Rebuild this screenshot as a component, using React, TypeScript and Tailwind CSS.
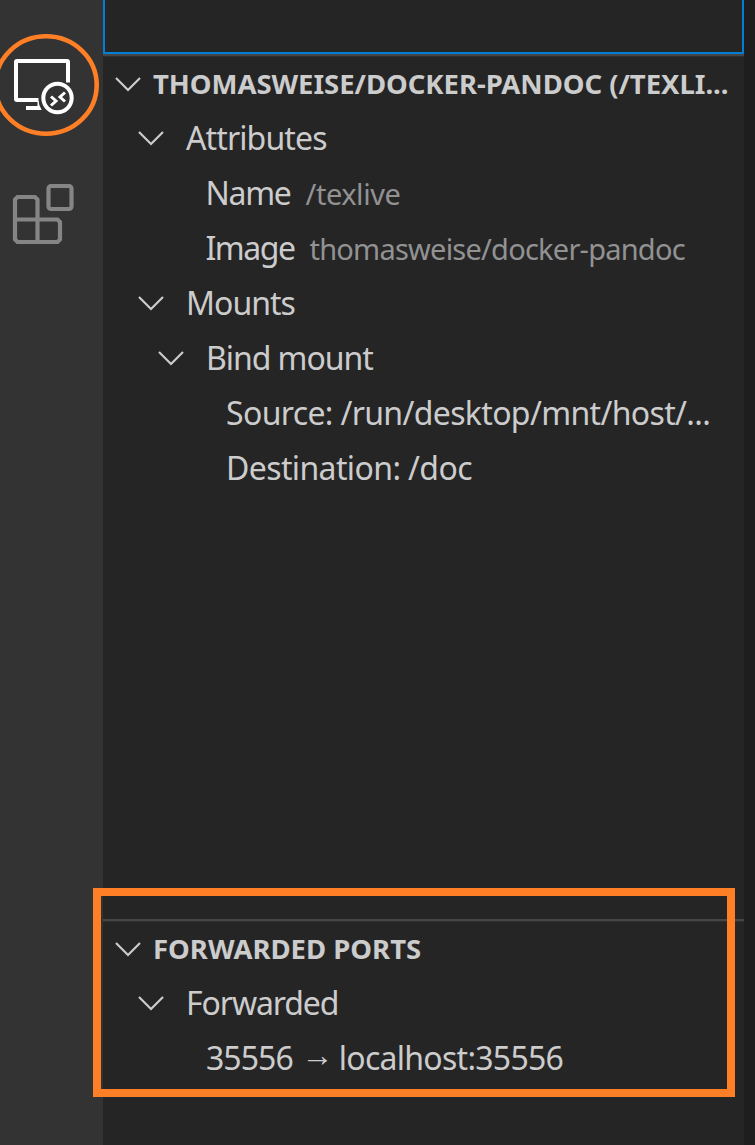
import type { ReactNode } from "react";

function Chevron() {
  return (
    <svg className="h-[16px] w-[28px] shrink-0" viewBox="0 0 28 16" fill="none" stroke="#cccccc" strokeWidth="2.2">
      <path d="M2 2 L14 14 L26 2" />
    </svg>
  );
}

function RemoteIcon() {
  return (
    <svg className="h-[60px] w-[64px]" viewBox="12 56 64 60" fill="none" stroke="#ffffff" strokeWidth="4">
      <path d="M68 82.5 V62 Q68 61 67 61 H17 Q16 61 16 62 V99 Q16 100 17 100 H38.5" />
      <path d="M26 106 H37.5 V101 H38.7 L39.3 105 L41.7 110 H26 Z" fill="#ffffff" stroke="none" />
      <circle cx="57.5" cy="98" r="14.2" />
      <path d="M51 96.5 L56 101 L51 105.5 M65 92.5 L60 97 L65 101.5" strokeWidth="3" />
    </svg>
  );
}

function ExtensionsIcon() {
  return (
    <svg className="h-[62px] w-[64px]" viewBox="11 183 64 62" fill="none" stroke="#858585" strokeWidth="4.2">
      <path d="M37.5 219 V199.5 L35 197 H17.5 L15 199.5 V239.5 L17.5 242 H57.5 L60 239.5 V222 L57.5 219.5 H15 M37.5 219 V242" />
      <rect x="48.5" y="186" width="23" height="23" rx="2.5" />
    </svg>
  );
}

type RowProps = { indent: string; open?: boolean; children: ReactNode };

function Row({ indent, open, children }: RowProps) {
  return (
    <div className={`flex h-[55px] items-baseline whitespace-pre text-[32px] leading-[54px] text-[#cccccc] ${indent}`}>
      {open && (
        <span className="mr-[21px] flex h-[54px] items-center self-start">
          <Chevron />
        </span>
      )}
      {children}
    </div>
  );
}

function Header({ children }: { children: ReactNode }) {
  return (
    <div className="flex h-[55px] items-center border-t border-[#2f2f30] pl-[11px] text-[27.5px] font-bold leading-[54px] text-[#cccccc]">
      <Chevron />
      <span className="ml-[11px] flex whitespace-pre">{children}</span>
    </div>
  );
}

export default function App() {
  return (
    <div className="relative flex h-[1145px] w-[755px] overflow-hidden bg-[#1e1e1e] font-['Noto_Sans',sans-serif]">
      <nav className="flex w-[103px] flex-col bg-[#333333] pl-[12px] pt-[56px]">
        <RemoteIcon />
        <div className="-ml-[1.5px] mt-[67px]">
          <ExtensionsIcon />
        </div>
      </nav>
      <aside className="flex w-[641px] flex-col bg-[#252526]">
        <div className="h-[54px] border-2 border-t-0 border-[#007fd4]" />
        <section className="flex h-[865px] flex-col border-t-2 border-[#464647]">
          <Header>
            <span className="tracking-[-0.04px]">THOMASWEISE/DOCKER-PANDOC (/TEXLI...</span>
          </Header>
          <Row indent="pl-[33.5px]" open>
            <span className="ml-[0.5px] tracking-[-0.88px]">Attributes</span>
          </Row>
          <Row indent="pl-[102.5px]">
            <span className="tracking-[-1.3px]">Name</span>
            <span className="ml-[15px] text-[29px] tracking-[-0.45px] text-[#929292]">/texlive</span>
          </Row>
          <Row indent="pl-[102.5px]">
            <span className="tracking-[-1.5px]">Image</span>
            <span className="ml-[15px] text-[29px] tracking-[-0.77px] text-[#929292]">thomasweise/docker-pandoc</span>
          </Row>
          <Row indent="pl-[33.5px]" open>
            <span className="ml-[0.5px] tracking-[-1px]">Mounts</span>
          </Row>
          <Row indent="pl-[53.5px]" open>
            <span className="ml-[0.5px] tracking-[-1.05px]">Bind mount</span>
          </Row>
          <Row indent="pl-[123px]">
            <span className="tracking-[-0.65px]">Source: /run/desktop/mnt/host/...</span>
          </Row>
          <Row indent="pl-[123px]">
            <span className="tracking-[-0.62px]">Destination: /doc</span>
          </Row>
        </section>
        <section className="flex flex-col border-t-2 border-[#464647]">
          <Header>
            <span>FORWARDED PORTS</span>
          </Header>
          <Row indent="pl-[33.5px]" open>
            <span className="ml-[0.5px] tracking-[-1.1px]">Forwarded</span>
          </Row>
          <Row indent="pl-[103px]">
            <span className="tracking-[-0.95px]">35556</span>
            <span className="ml-[6px] mr-[3px] inline-block w-[37px] -translate-y-[4px] text-center">→</span>
            <span className="tracking-[-0.73px]">localhost:35556</span>
          </Row>
        </section>
      </aside>
      <svg className="absolute left-0 top-[30px] h-[110px] w-[103px]" viewBox="0 30 103 110" fill="none">
        <ellipse cx="46" cy="85" rx="50.7" ry="48.7" stroke="#ff7f27" strokeWidth="4.6" />
      </svg>
      <div className="absolute left-[93px] top-[888px] h-[209px] w-[642px] border-8 border-[#ff7f27]" />
    </div>
  );
}
